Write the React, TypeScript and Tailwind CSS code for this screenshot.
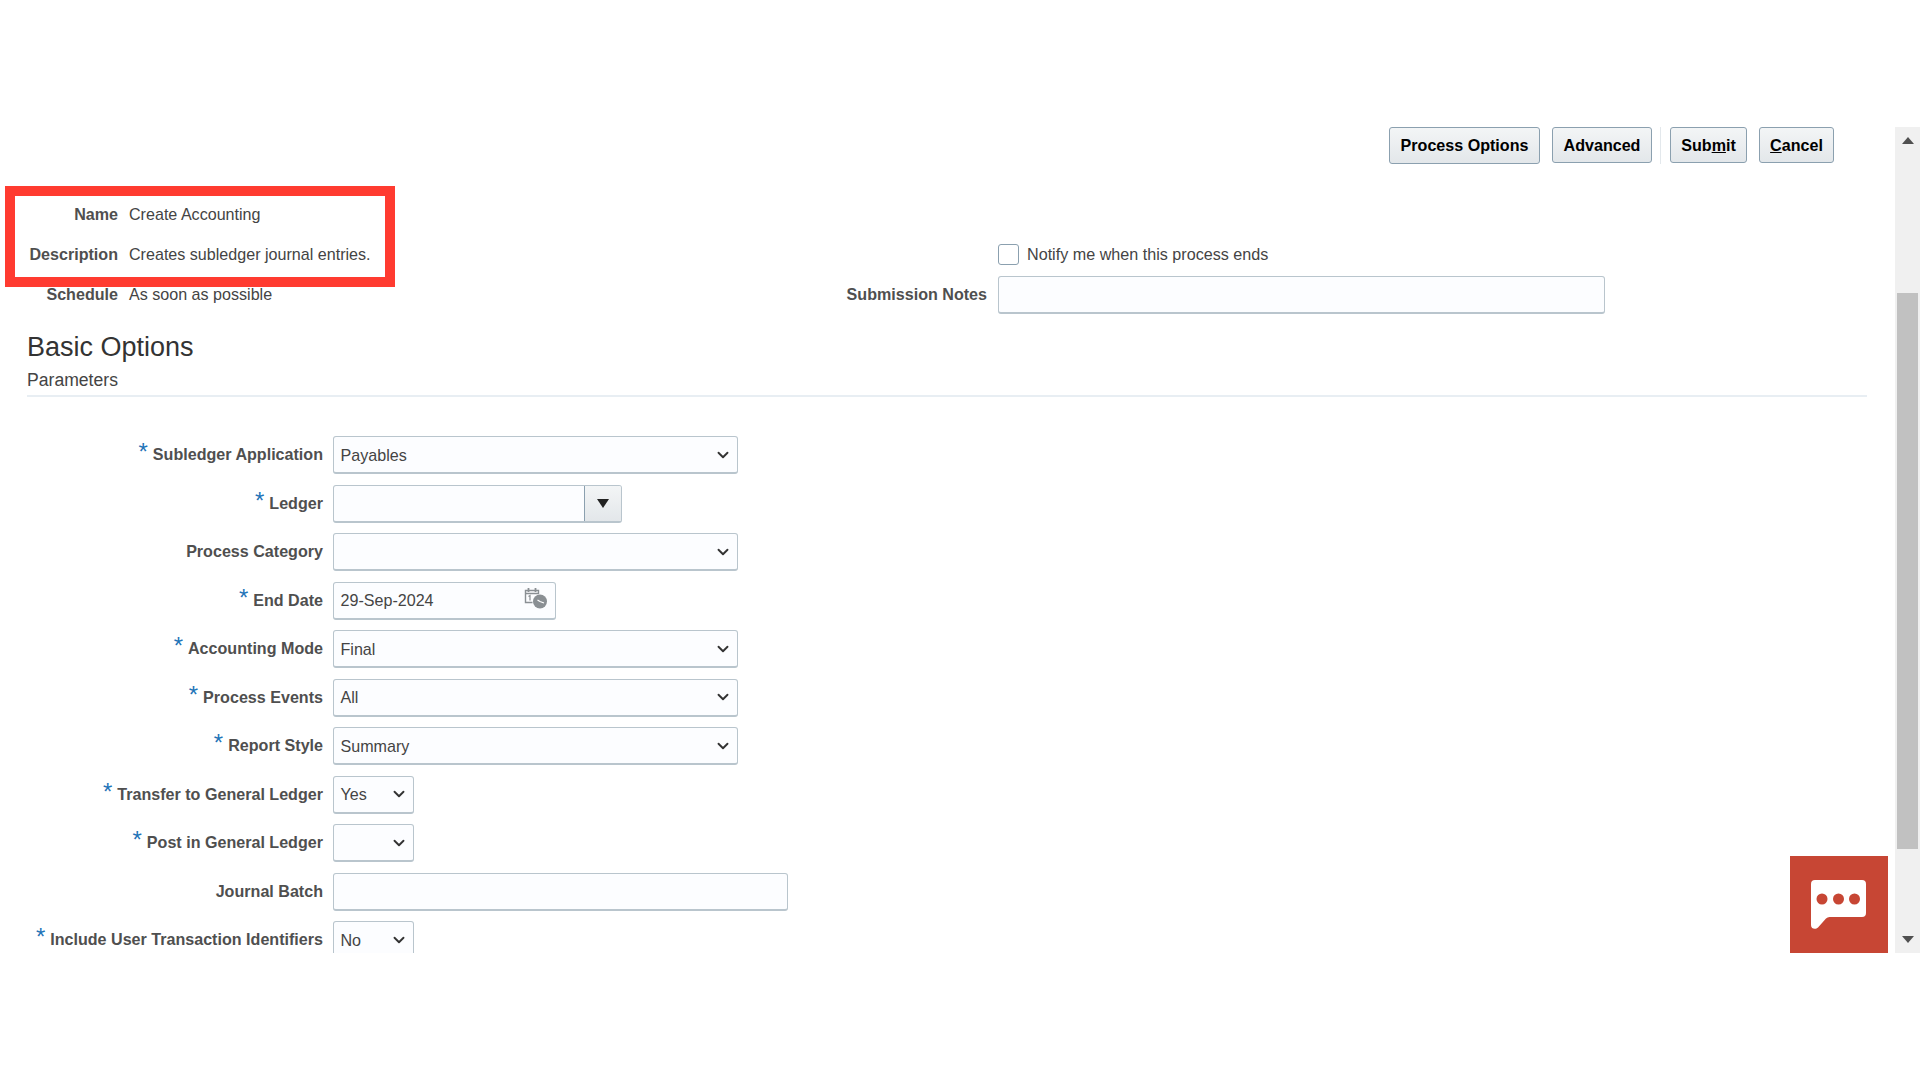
import { ChevronDown } from "lucide-react";

const fieldBox = "h-[38px] rounded-[3px] border border-[#b9c5cd] border-b-2 bg-[#fcfdff]";

function Required() {
  return <span className="mr-[5px] -mt-[4px] text-[24px] leading-none font-normal text-[#1f74b8]">*</span>;
}

function Select({ value, width }: { value?: string; width: string }) {
  return (
    <div className={`${fieldBox} ${width} flex items-center justify-between pl-[6.500px] pr-[5px] text-[16.1px] text-[#444]`}>
      <span>{value}</span>
      <ChevronDown size={18} strokeWidth={2.5} className="text-[#333]" />
    </div>
  );
}

function FormRow({ label, required, children }: { label: string; required?: boolean; children: React.ReactNode }) {
  return (
    <div className="flex h-[48.5px] items-center">
      <div className="-mt-[2px] flex w-[323px] items-center justify-end text-[16.1px] font-bold text-[#4f4f4f]">
        {required && <Required />}
        <span>{label}</span>
      </div>
      <div className="ml-[10px]">{children}</div>
    </div>
  );
}

function Button({ children, width, tall }: { children: React.ReactNode; width: string; tall?: boolean }) {
  return (
    <button
      className={`${width} ${tall ? "h-[37px]" : "h-[36px]"} rounded-[3px] border border-[#8ba0af] bg-gradient-to-b from-[#f3f5f6] to-[#e3e7ea] text-[16.1px] font-bold text-black`}
    >
      {children}
    </button>
  );
}

function Info({ label, value }: { label: string; value: string }) {
  return (
    <div className="flex h-10 items-center text-[16.1px]">
      <span className="w-[118px] text-right font-bold text-[#4f4f4f]">{label}</span>
      <span className="ml-[11px] text-[#444]">{value}</span>
    </div>
  );
}

function CalendarClock() {
  return (
    <svg width="24" height="22" viewBox="0 0 24 22" fill="none">
      <path d="M1.5 3.5h13v3h-13zM1.5 6.5v9h7" stroke="#8a8f93" strokeWidth="1.4" />
      <path d="M4.5 1v4M11.5 1v4" stroke="#8a8f93" strokeWidth="1.8" />
      <path d="M4.5 9.5l1.5-1v5" stroke="#8a8f93" strokeWidth="1.2" />
      <circle cx="16" cy="14.5" r="7" fill="#8a8f93" />
      <path d="M16 14.5l4 1.5M16 14.5l-2.500-1.500" stroke="#fff" strokeWidth="1.200" />
    </svg>
  );
}

export default function App() {
  return (
    <div className="relative h-[1080px] w-[1920px] overflow-hidden bg-white pt-[127px] font-['Liberation_Sans',Arial,sans-serif]">
      <div className="flex h-[826px]">
        <div className="w-[1895px] overflow-hidden">
          {/* Toolbar */}
          <div className="flex h-[37px] items-start justify-end pr-[61px]">
            <Button width="w-[151px]" tall>Process Options</Button>
            <div className="ml-3">
              <Button width="w-[100px]">Advanced</Button>
            </div>
            <div className="mr-[9px] ml-[8px] h-[37px] w-px bg-[#e3e8ec]" />
            <Button width="w-[77px]">
              Sub<span className="underline">m</span>it
            </Button>
            <div className="ml-3">
              <Button width="w-[75px]">
                <span className="underline">C</span>ancel
              </Button>
            </div>
          </div>

          {/* Process details */}
          <div className="mt-[30px] flex">
            <div className="w-[998px]">
              <Info label="Name" value="Create Accounting" />
              <Info label="Description" value="Creates subledger journal entries." />
              <Info label="Schedule" value="As soon as possible" />
            </div>
            <div className="-ml-[200px] flex flex-col pt-10">
              <div className="flex h-10 items-center pl-[200px]">
                <div className="h-[21px] w-[21px] rounded-[3px] border border-[#8ba0af] bg-white" />
                <span className="ml-2 text-[16.15px] text-[#444]">Notify me when this process ends</span>
              </div>
              <div className="mt-px flex h-10 items-center">
                <span className="-mt-[2px] w-[189px] text-right text-[16.1px] font-bold whitespace-nowrap text-[#4f4f4f]">Submission Notes</span>
                <div className={`${fieldBox} ml-[11px] w-[607px]`} />
              </div>
            </div>
          </div>

          {/* Basic Options */}
          <div className="mt-[14px] ml-[27px] w-[1840px] border-b-2 border-[#e8eef3] pb-[3px]">
            <h1 className="text-[27px] leading-[36px] font-normal text-[#333]">Basic Options</h1>
            <div className="mt-[3px] text-[17.6px] leading-[24px] text-[#444]">Parameters</div>
          </div>

          <div className="mt-[34px]">
            <FormRow label="Subledger Application" required>
              <Select value="Payables" width="w-[405px]" />
            </FormRow>
            <FormRow label="Ledger" required>
              <div className={`${fieldBox} flex w-[289px] justify-end overflow-hidden`}>
                <div className="flex w-[37px] items-center justify-center border-l border-[#8ba0af] bg-gradient-to-b from-[#f3f5f6] to-[#e3e7ea]">
                  <svg width="12" height="9" viewBox="0 0 12 9">
                    <path d="M0 0h12L6 9z" fill="#222" />
                  </svg>
                </div>
              </div>
            </FormRow>
            <FormRow label="Process Category">
              <Select width="w-[405px]" />
            </FormRow>
            <FormRow label="End Date" required>
              <div className={`${fieldBox} flex w-[223px] items-center justify-between pr-[7px] pl-[6.500px] text-[16.1px] text-[#444]`}>
                <span>29-Sep-2024</span>
                <span className="-mt-[5px]"><CalendarClock /></span>
              </div>
            </FormRow>
            <FormRow label="Accounting Mode" required>
              <Select value="Final" width="w-[405px]" />
            </FormRow>
            <FormRow label="Process Events" required>
              <Select value="All" width="w-[405px]" />
            </FormRow>
            <FormRow label="Report Style" required>
              <Select value="Summary" width="w-[405px]" />
            </FormRow>
            <FormRow label="Transfer to General Ledger" required>
              <Select value="Yes" width="w-[81px]" />
            </FormRow>
            <FormRow label="Post in General Ledger" required>
              <Select width="w-[81px]" />
            </FormRow>
            <FormRow label="Journal Batch">
              <div className={`${fieldBox} w-[455px]`} />
            </FormRow>
            <FormRow label="Include User Transaction Identifiers" required>
              <Select value="No" width="w-[81px]" />
            </FormRow>
          </div>
        </div>

        {/* Scrollbar */}
        <div className="flex w-[25px] flex-col items-center bg-[#f0f0f0]">
          <svg width="12" height="7" viewBox="0 0 12 7" className="mt-[10px]">
            <path d="M0 7h12L6 0z" fill="#505050" />
          </svg>
          <div className="mt-[149px] h-[556px] w-[21px] bg-[#c1c1c1]" />
          <svg width="12" height="7" viewBox="0 0 12 7" className="mt-[87px]">
            <path d="M0 0h12L6 7z" fill="#505050" />
          </svg>
        </div>
      </div>

      {/* Annotation box */}
      <div className="absolute top-[186px] left-[5px] h-[101px] w-[390px] border-[10px] border-[#ff3b30]" />

      {/* Chat widget */}
      <div className="absolute top-[856px] left-[1790px] flex h-[97px] w-[98px] items-center justify-center bg-[#c74634]">
        <svg width="56" height="50" viewBox="0 0 56 50">
          <path
            d="M4 0h47a4 4 0 0 1 4 4v29a4 4 0 0 1-4 4H18.500a5 5 0 0 0-3.500 1.500L7 47.500c-2.500 2.500-7 1.500-7-2.500V4a4 4 0 0 1 4-4z"
            fill="#fff"
          />
          <circle cx="11" cy="19" r="5.500" fill="#c74634" />
          <circle cx="27.500" cy="19" r="5.500" fill="#c74634" />
          <circle cx="43.500" cy="19" r="5.500" fill="#c74634" />
        </svg>
      </div>
    </div>
  );
}
